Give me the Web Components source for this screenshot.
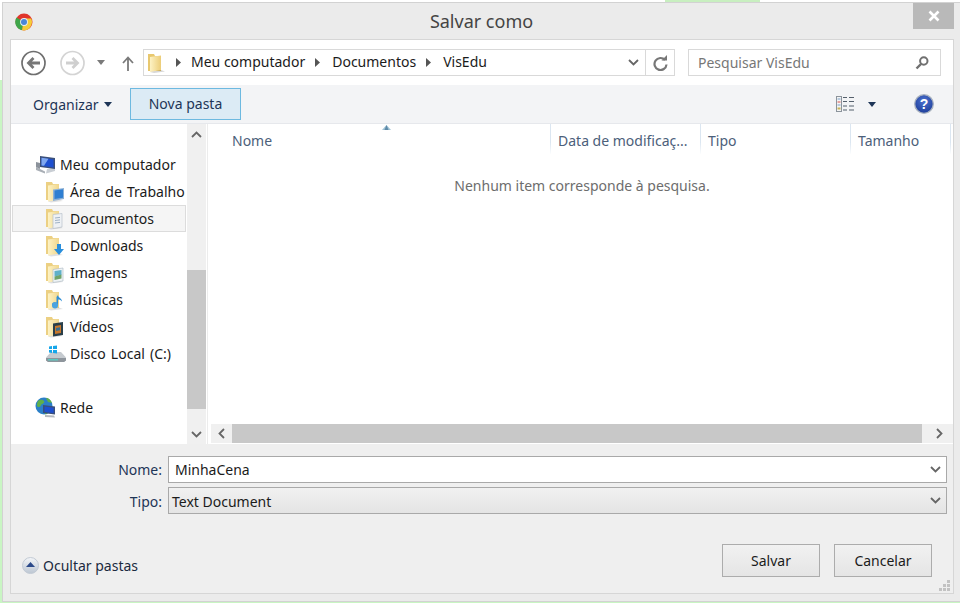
<!DOCTYPE html>
<html lang="pt"><head><meta charset="utf-8"><title>Salvar como</title>
<style>
html,body{margin:0;height:603px;overflow:hidden}
body{background:linear-gradient(#c8efc0,#c8efc0) 665px 0/95px 2px no-repeat,linear-gradient(#fff 80px,#c9f5c3 80px);font:14px "Noto Sans","Open Sans",sans-serif;color:#1b1b1b}
</style></head><body>
<x-dialog>
  <x-nav-bar slot="nav" crumbs="Meu computador|Documentos|VisEdu" search="Pesquisar VisEdu"></x-nav-bar>
  <x-tool-bar slot="tools"></x-tool-bar>
  <x-nav-pane slot="pane">
    <x-nav-item icon="computer" level="0">Meu computador</x-nav-item>
    <x-nav-item icon="desk" level="1">Área de Trabalho</x-nav-item>
    <x-nav-item icon="docs" level="1" selected>Documentos</x-nav-item>
    <x-nav-item icon="down" level="1">Downloads</x-nav-item>
    <x-nav-item icon="pics" level="1">Imagens</x-nav-item>
    <x-nav-item icon="music" level="1">Músicas</x-nav-item>
    <x-nav-item icon="video" level="1">Vídeos</x-nav-item>
    <x-nav-item icon="disk" level="1">Disco Local (C:)</x-nav-item>
    <x-nav-item icon="net" level="0" gap>Rede</x-nav-item>
  </x-nav-pane>
  <x-file-list slot="list"></x-file-list>
  <x-save-footer slot="footer"></x-save-footer>
</x-dialog>
<script>
let uid=0;
const folder=(o)=>{const id="f"+(++uid);return `<svg width="20" height="22" viewBox="0 0 20 22"><defs><linearGradient id="${id}" x1="0" x2="1" y1="0" y2="0"><stop offset="0" stop-color="#fdf2c4"/><stop offset="1" stop-color="#f0d68c"/></linearGradient></defs><path d="M1 1h6l1 2h6v16H1z" fill="#ecd083"/><path d="M3 4.500 14 3v15.500L3 20.500z" fill="url(#${id})"/><path d="M3 20.500 14 18.500 18 20 6 21.500z" fill="#000" opacity=".12"/>${o}</svg>`};
const ICONS={
 folderBig:`<svg width="17" height="20" viewBox="0 0 17 20"><defs><linearGradient id="g" x1="0" x2="1" y1="0" y2="0"><stop offset="0" stop-color="#fdf2c4"/><stop offset="1" stop-color="#eccd78"/></linearGradient></defs><path d="M0 1h6l1 2h6v15H0z" fill="#e8c86f"/><path d="M2 4l11-1.500V17L2 19z" fill="url(#g)"/><path d="M2 19l11-2 4 1.500L6 20z" fill="#000" opacity=".16"/></svg>`,
 desk:folder(`<path d="M8 8.500 19 7v11L8 20z" fill="#8db1d6"/><path d="M9.500 9.500 18 8.300v8.500L9.500 18z" fill="#2f7fd2"/>`),
 docs:folder(`<path d="M8 6.500 17 5.500V19L8 20.500z" fill="#eef1f4" stroke="#b9c2cb" stroke-width=".7"/><path d="M10 10l5-.6M10 12.500l5-.6M10 15l5-.6" stroke="#9fb2c6"/>`),
 down:folder(`<path d="M12 9h4v5h3l-5 6-5-6h3z" fill="#2a8fdc"/>`),
 pics:folder(`<path d="M8 7.500 18 6v13L8 20.500z" fill="#eef3f5" stroke="#b5c0c8" stroke-width=".7"/><path d="M9.500 9 16.500 8v5l-7 1.500z" fill="#5fb0c9"/><path d="M9.500 14.500 16.500 12.500v4l-7 1.500z" fill="#6fa36a"/>`),
 music:folder(`<path d="M13 6v9.500a3 2.500 0 1 1-1.500-2V8z" fill="#2f8fd6"/><path d="M13 6c0 3 4 3 4 6.500-1-1.500-2.500-2-4-2z" fill="#2f8fd6"/><circle cx="10" cy="16.500" r="3" fill="#4ba3e0"/>`),
 video:folder(`<path d="M8 7.500 18 6v13L8 20.500z" fill="#2a3f4a"/><path d="M10 10l6-1v8l-6 1z" fill="#c8772b"/><path d="M11 12l4-.7v3l-4 .8z" fill="#3b6f8f"/>`),
 computer:`<svg width="22" height="20" viewBox="0 0 22 20"><path d="M1 12l9 4.500v2L1 15z" fill="#a9afb6"/><path d="M12 14l8-1v3l-9 2.500z" fill="#c9ced4"/><path d="M5 1l15 2v11L5 12z" fill="#3a4f7a"/><path d="M6.500 2.800l12 1.600v8L6.500 10.800z" fill="#1d4fd0"/><path d="M6.500 2.800l7 1-4.500 7-2.500-.3z" fill="#7fa7ef"/><path d="M1 7l4 1v6L1 12z" fill="#8b929b"/></svg>`,
 disk:`<svg width="22" height="20" viewBox="0 0 22 20"><path d="M1 13.500 6 8h10l5 5.500v3l-2 1.500H3l-2-1.500z" fill="#c5cacf"/><path d="M1 14h20v2.500l-2 1.500H3l-2-1.500z" fill="#8e959c"/><path d="M3 15h10v1.500H3z" fill="#5cc8c0"/><path d="M4 2.500l3-.5v3H4zM8 2l4-.5V5H8zM4 6h3v3l-3-.4zM8 6h4v3.600L8 9z" fill="#16a6ea"/></svg>`,
 net:`<svg width="22" height="22" viewBox="0 0 22 22"><circle cx="9" cy="9" r="8.500" fill="#2b7fc8"/><path d="M3 4c3-2 5-1 6 0s-1 3-2 3-1 3-3 3-3-2-1-6zM10 12c2-1 4 0 3 3s-3 3-3 1-1-3 0-4zM11 1c3 0 5 2 6 5l-4-1z" fill="#5fb04a"/><path d="M8 8l12 1.500v8L8 16z" fill="#3a4f7a"/><path d="M9.500 9.500 18.600 10.700v5.400L9.500 15z" fill="#1d4fd0"/><path d="M10 18l9 .5 1 2-10-.5z" fill="#b4b9bf"/></svg>`,
 chrome:`<svg width="18" height="18" viewBox="0 0 18 18"><circle cx="9" cy="9" r="8.500" fill="#e0352b"/><path d="M9 9 1.500 4.500A8.500 8.500 0 0 0 7 17.300z" fill="#3fa64a"/><path d="M9 5.500h7.200A8.500 8.500 0 0 1 7 17.300z" fill="#f5cd3a"/><circle cx="9" cy="9" r="3.900" fill="#e9eef5"/><circle cx="9" cy="9" r="3" fill="#4a86d8"/></svg>`,
 back:`<svg width="25" height="26" viewBox="0 0 25 26"><circle cx="12.500" cy="13" r="11.500" fill="#fff" stroke="#6f6f6f" stroke-width="1.700"/><path d="M19 13H8M12.500 8 7.500 13l5 5" fill="none" stroke="#777" stroke-width="2.800"/></svg>`,
 forward:`<svg width="25" height="26" viewBox="0 0 25 26"><circle cx="12.500" cy="13" r="11.500" fill="#fff" stroke="#d4d4d4" stroke-width="1.700"/><path d="M6 13h11M12.500 8l5 5-5 5" fill="none" stroke="#cfcfcf" stroke-width="2.800"/></svg>`,
 up:`<svg width="12" height="15" viewBox="0 0 12 15"><path d="M6 15V2M1 7l5-5.500L11 7" fill="none" stroke="#7a7a7a" stroke-width="1.800"/></svg>`,
 caretGray:`<svg width="8" height="5" viewBox="0 0 8 5"><path d="M0 0h8L4 5z" fill="#7a7a7a"/></svg>`,
 caretDark:`<svg width="8" height="5" viewBox="0 0 8 5"><path d="M0 0h8L4 5z" fill="#1e3557"/></svg>`,
 crumb:`<svg width="5" height="9" viewBox="0 0 5 9"><path d="M0 0l5 4.500L0 9z" fill="#555"/></svg>`,
 chevDown:`<svg width="11" height="7" viewBox="0 0 11 7"><path d="M1 1l4.500 4.500L10 1" fill="none" stroke="#666" stroke-width="1.800"/></svg>`,
 chevUp:`<svg width="11" height="7" viewBox="0 0 11 7"><path d="M1 6l4.500-4.500L10 6" fill="none" stroke="#666" stroke-width="1.800"/></svg>`,
 chevLeft:`<svg width="7" height="11" viewBox="0 0 7 11"><path d="M6 1 1.500 5.500 6 10" fill="none" stroke="#666" stroke-width="1.800"/></svg>`,
 chevRight:`<svg width="7" height="11" viewBox="0 0 7 11"><path d="M1 1l4.500 4.500L1 10" fill="none" stroke="#666" stroke-width="1.800"/></svg>`,
 refresh:`<svg width="15" height="16" viewBox="0 0 15 16"><path d="M12 5A6 6 0 1 0 13.500 9.500" fill="none" stroke="#777" stroke-width="2.200"/><path d="M8.500 5.500h5.500V0z" fill="#777"/></svg>`,
 search:`<svg width="14" height="14" viewBox="0 0 14 14"><circle cx="8.800" cy="5" r="3.700" fill="none" stroke="#707070" stroke-width="2"/><path d="M6 8 1.500 12.500" stroke="#707070" stroke-width="2.400"/></svg>`,
 close:`<svg width="12" height="12" viewBox="0 0 12 12"><path d="M1.500 1.500l9 9M10.500 1.500l-9 9" stroke="#fff" stroke-width="2.600"/></svg>`,
 views:`<svg width="19" height="16" viewBox="0 0 19 16"><rect x=".5" y=".5" width="5" height="15" fill="#f4f4f4" stroke="#8c949c"/><path d="M1.500 3h3" stroke="#7aa0c8"/><path d="M1.500 6h3" stroke="#d9534f"/><path d="M1.500 9h3" stroke="#7aa0c8"/><path d="M1.500 12.500h3" stroke="#c9b458" stroke-width="2"/><path d="M7 1.500h4M13 1.500h5M7 5.500h4M13 5.500h5M7 10h4M13 10h5M7 14h4M13 14h5" stroke="#55606c"/></svg>`,
 help:`<svg width="20" height="20" viewBox="0 0 20 20"><defs><radialGradient id="h" cx=".5" cy=".35" r=".7"><stop offset="0" stop-color="#4d72d0"/><stop offset="1" stop-color="#1a3a96"/></radialGradient></defs><circle cx="10" cy="10" r="9.300" fill="url(#h)" stroke="#a9b2bf" stroke-width="1.300"/><text x="10" y="15" text-anchor="middle" font-family="Liberation Sans" font-weight="700" font-size="14" fill="#fff">?</text></svg>`,
 sort:`<svg width="9" height="5" viewBox="0 0 9 5"><path d="M4.500 0 9 5H0z" fill="#9fc3d6"/><path d="M4.500 0 6.500 5h-4z" fill="#5e8aa8"/></svg>`,
 hide:`<svg width="17" height="17" viewBox="0 0 17 17"><defs><linearGradient id="c" x1="0" x2="0" y1="0" y2="1"><stop offset="0" stop-color="#f4f6f9"/><stop offset="1" stop-color="#bcc6d2"/></linearGradient></defs><circle cx="8.500" cy="8.500" r="8" fill="url(#c)" stroke="#c2cad4"/><path d="M8.500 5 13 10H4z" fill="#2c4a8a"/></svg>`,
 grip:`<svg width="11" height="11" viewBox="0 0 11 11"><path d="M8 0h3v3H8zM4 4h3v3H4zM8 4h3v3H8zM0 8h3v3H0zM4 8h3v3H4zM8 8h3v3H8z" fill="#c2c2c2"/></svg>`
};
function def(name,css,html){
  customElements.define(name,class extends HTMLElement{
    connectedCallback(){
      if(this.shadowRoot)return;
      const s=this.attachShadow({mode:"open"});
      s.innerHTML=`<style>${css}</style>`+(typeof html==="function"?html(this):html);
    }
  });
}
def("x-icon",":host{display:inline-flex;flex:none;line-height:0}",h=>ICONS[h.getAttribute("name")]||"");

def("x-dialog",`
:host{display:flex;flex-direction:column;box-sizing:border-box;height:600px;margin:2px 0 0 2px;border:solid #d2d2d2;border-width:1px 0 1px 1px;background:#ebebeb}
.title{height:36px;display:grid;grid-template-columns:1fr auto 1fr;padding-left:12px;flex:none}
.app{padding-top:10px}
h1{margin:0;font:400 18px/36px "Noto Sans",sans-serif;color:#444;text-align:center;position:relative;left:-6px}
.end{display:flex;justify-content:flex-end;padding-right:6px}
.close{width:41px;height:26px;background:#b9b9b9;display:flex;align-items:center;justify-content:center}
.client{flex:1;min-height:0;margin:0 6px 7px 7px;border:1px solid #d6d6d6;background:#fff;display:flex;flex-direction:column}
.body{height:320px;display:flex;flex:none}
::slotted([slot=pane]){flex:none}
::slotted([slot=list]){flex:1;min-width:0}
`,`<div class="title"><div class="app"><x-icon name="chrome"></x-icon></div><h1>Salvar como</h1><div class="end"><div class="close"><x-icon name="close"></x-icon></div></div></div>
<div class="client"><slot name="nav"></slot><slot name="tools"></slot><div class="body"><slot name="pane"></slot><slot name="list"></slot></div><slot name="footer"></slot></div>`);

def("x-nav-bar",`
:host{display:flex;align-items:center;height:45px;flex:none;padding:0 12px 0 10px;box-sizing:border-box;background:#fff}
.c{margin-left:14px}.dd{margin:0 0 0 12px}.u{margin:0 9px 0 17px;position:relative;top:1px}
.addr{display:flex;align-items:center;width:532px;height:27px;box-sizing:border-box;border:1px solid #d9d9d9;font-size:14px;color:#1b1b1b;flex:none}
.t{padding-bottom:3px}
.fold{margin-left:4px;margin-top:1px}
.cr{margin-left:11px;margin-right:10px}
.cr~.cr{margin-left:10px;margin-right:12px}
.sp{flex:1}
.chev{margin-right:6px;display:flex}
.ref{width:28px;height:25px;border-left:1px solid #d9d9d9;display:flex;align-items:center;justify-content:center}
.search{margin-left:13px;height:27px;width:253px;box-sizing:border-box;border:1px solid #d9d9d9;display:flex;align-items:center;justify-content:space-between;padding:0 11px 0 9px;color:#777;font-size:14px}
.search span{padding-bottom:1px}
`,h=>{
 const cr=h.getAttribute("crumbs").split("|").map(t=>`<x-icon class="cr" name="crumb"></x-icon><span class="t">${t}</span>`).join("");
 return `<x-icon name="back"></x-icon><x-icon class="c" name="forward"></x-icon><x-icon class="dd" name="caretGray"></x-icon><x-icon class="u" name="up"></x-icon>
 <div class="addr"><x-icon class="fold" name="folderBig"></x-icon>${cr}<span class="sp"></span><x-icon class="chev" name="chevDown"></x-icon><div class="ref"><x-icon name="refresh"></x-icon></div></div>
 <div class="search"><span>${h.getAttribute("search")}</span><x-icon name="search"></x-icon></div>`;
});

def("x-tool-bar",`
:host{display:flex;align-items:center;height:39px;flex:none;box-sizing:border-box;background:#f3f4f6;border-bottom:1px solid #e6e8ec;font-size:14px;color:#1e3557;padding:0 19px 0 22px}
.org{display:flex;align-items:center;gap:5px;width:97px}
.new{width:111px;height:32px;box-sizing:border-box;border:1px solid #6db9e0;background:#dcebf5;display:flex;align-items:center;justify-content:center;margin-bottom:1px;color:#1e3557}
.sp{flex:1}
.car{margin:0 38px 0 13px}
`,`<div class="org"><span>Organizar</span><x-icon name="caretDark"></x-icon></div><div class="new">Nova pasta</div><span class="sp"></span><x-icon name="views"></x-icon><x-icon class="car" name="caretDark"></x-icon><x-icon name="help"></x-icon>`);

def("x-scroll-v",`
:host{display:flex;flex-direction:column;width:19px;background:#f0f0f0;flex:none}
.b{height:20px;display:flex;align-items:center;justify-content:center;flex:none}
.t{flex:1;display:flex;flex-direction:column}
.thumb{height:139px;background:#c8c8c8;margin-top:126px}
`,`<div class="b"><x-icon name="chevUp"></x-icon></div><div class="t"><div class="thumb"></div></div><div class="b"><x-icon name="chevDown"></x-icon></div>`);

def("x-nav-pane",`
:host{display:flex;width:197px;box-sizing:border-box;border-right:1px solid #ececec;padding-right:1px;background:#fff}
.items{width:176px;padding:27px 0 0 1px;box-sizing:border-box;overflow:hidden}
`,`<div class="items"><slot></slot></div><x-scroll-v></x-scroll-v>`);

def("x-nav-item",`
:host{display:flex;align-items:center;height:27px;box-sizing:border-box;white-space:nowrap;overflow:hidden;width:174px;color:#1b1b1b;font-size:14px;word-spacing:1.5px}
:host([level="0"]){padding-left:23px}
:host([level="1"]){padding-left:33px}
:host([selected]){background:#f5f5f5;box-shadow:inset 0 0 0 1px #dcdcdc}
:host([gap]){margin-top:27px}
.ic{width:25px;display:flex;flex:none}
`,h=>`<span class="ic"><x-icon name="${h.getAttribute("icon")}"></x-icon></span><span><slot></slot></span>`);

def("x-file-list",`
:host{display:flex;flex-direction:column;background:#fff;position:relative;font-size:14px}
.head{display:grid;grid-template-columns:343px 150px 150px 100px;height:32px;flex:none;padding-right:2px}
.h{padding-left:7px;border-right:1px solid;border-image:linear-gradient(#dbe6f1,#dbe6f1 60%,#fff) 1;color:#4c607a;line-height:34px;height:30px;white-space:nowrap;overflow:hidden}
.h:first-child{padding-left:24px}
.sort{position:absolute;left:174px;top:1px}
.empty{flex:1;text-align:center;color:#6d6d6d;padding-top:20px;padding-left:3px}
.hs{display:flex;height:19px;flex:none;padding-left:3px;margin-bottom:1px}
.a{width:21px;background:#f0f0f0;display:flex;align-items:center;justify-content:center;flex:none}
.th{width:690px;background:#c8c8c8;flex:none}
.rest{flex:1;background:#f0f0f0;display:flex;align-items:center;justify-content:flex-end;padding-right:10px}
`,`<div class="head"><div class="h">Nome</div><div class="h">Data de modificaç...</div><div class="h">Tipo</div><div class="h">Tamanho</div></div><x-icon class="sort" name="sort"></x-icon>
<div class="empty">Nenhum item corresponde à pesquisa.</div>
<div class="hs"><div class="a"><x-icon name="chevLeft"></x-icon></div><div class="th"></div><div class="rest"><x-icon name="chevRight"></x-icon></div></div>`);

def("x-save-footer",`
:host{flex:1;min-height:0;display:flex;flex-direction:column;background:#efefef;position:relative;box-sizing:border-box;padding:12px 6px 16px 0;font-size:14px;color:#1b1b1b}
.form{display:grid;grid-template-columns:151px 1fr;column-gap:6px;row-gap:4px;align-items:center}
label{text-align:right;color:#1e3557}
label.l2{padding-top:2px}
.f{height:27px;box-sizing:border-box;border:1px solid #a9a9a9;display:flex;align-items:center;justify-content:space-between;padding-right:5px}
.in{background:#fff;padding-left:6px}
.sel{background:linear-gradient(#f1f1f1,#e4e4e4);padding-left:3px}
.sel span{padding-top:2px}
.bot{margin-top:auto;display:flex;align-items:center;padding-left:11px}
.hide{display:flex;align-items:center;gap:4px;margin-top:9px;color:#1b2a40}
.sp{flex:1}
button{font:inherit;color:#1b1b1b;width:98px;height:33px;box-sizing:border-box;border:1px solid #acacac;background:linear-gradient(#f1f1f1,#e5e5e5);padding:0}
.c{margin:0 15px 0 14px}
.grip{position:absolute;right:3px;bottom:2px}
`,`<div class="form"><label>Nome:</label><div class="f in"><span>MinhaCena</span><x-icon name="chevDown"></x-icon></div><label class="l2">Tipo:</label><div class="f sel"><span>Text Document</span><x-icon name="chevDown"></x-icon></div></div>
<div class="bot"><div class="hide"><x-icon name="hide"></x-icon><span>Ocultar pastas</span></div><span class="sp"></span><button>Salvar</button><button class="c">Cancelar</button></div><x-icon class="grip" name="grip"></x-icon>`);
</script>
</body></html>
